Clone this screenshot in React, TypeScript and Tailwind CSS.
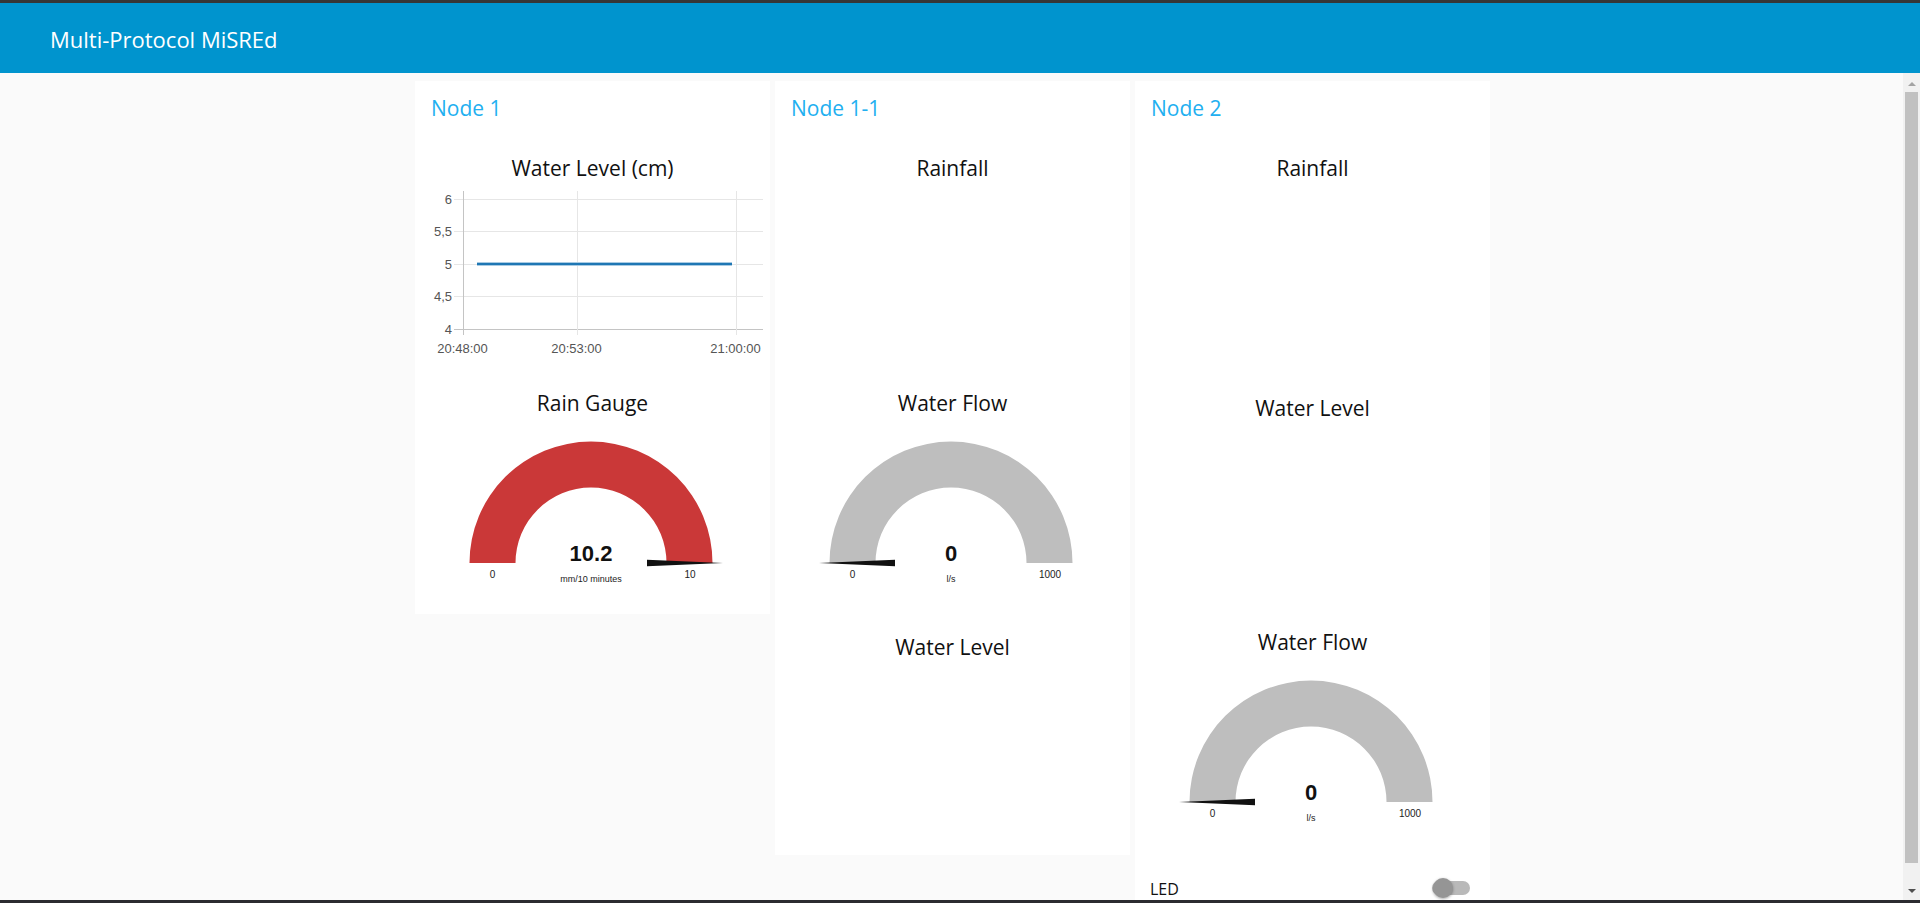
import React from 'react';

// gauge geometry shared by all three dials
const CX = 176;
const CY = 147;
const R_OUT = 121.5;
const R_IN = 75.5;

type GaugeProps = {
  value: string;
  unit: string;
  min: string;
  max: string;
  color: string;
  atMax?: boolean;
  className: string;
};

const Gauge: React.FC<GaugeProps> = ({ value, unit, min, max, color, atMax, className }) => {
  const ring = `M ${CX - R_OUT} ${CY} A ${R_OUT} ${R_OUT} 0 0 1 ${CX + R_OUT} ${CY} L ${CX + R_IN} ${CY} A ${R_IN} ${R_IN} 0 0 0 ${CX - R_IN} ${CY} Z`;
  const s = atMax ? 1 : -1;
  const needle = `${CX + s * 56},${CY - 3.3} ${CX + s * 132},${CY} ${CX + s * 56},${CY + 3.3}`;

  return (
    <svg width="355" className={`block ${className}`}>
      <path d={ring} fill={color} />
      <polygon points={needle} fill="#111" />
      <text x={CX} y={CY - 2.5} textAnchor="middle" fontFamily="'Liberation Sans', Arial, sans-serif" fontWeight="bold" fontSize="22" fill="#111">
        {value}
      </text>
      <text x={CX} y={CY + 19} textAnchor="middle" fontFamily="'Liberation Sans', Arial, sans-serif" fontSize="9" fill="#222">
        {unit}
      </text>
      <text x={CX - 98.5} y={CY + 15} textAnchor="middle" fontFamily="'Liberation Sans', Arial, sans-serif" fontSize="10" fill="#222">
        {min}
      </text>
      <text x={CX + 99} y={CY + 15} textAnchor="middle" fontFamily="'Liberation Sans', Arial, sans-serif" fontSize="10" fill="#222">
        {max}
      </text>
    </svg>
  );
};

const yTicks = [
  { y: 18.5, label: '6' },
  { y: 50.5, label: '5,5' },
  { y: 83.5, label: '5' },
  { y: 115.5, label: '4,5' },
  { y: 148.5, label: '4' },
];

const xTicks = [
  { x: 48.5, label: '20:48:00' },
  { x: 162.5, label: '20:53:00' },
  { x: 321.5, label: '21:00:00' },
];

const LineChart: React.FC = () => (
  <svg width="355" height="207" className="block" fontFamily="'Liberation Sans', Arial, sans-serif" fontSize="13">
    {yTicks.map((t) => (
      <g key={t.label}>
        <line x1="39" x2="348" y1={t.y} y2={t.y} stroke={t.label === '4' ? '#c4c4c4' : '#e6e6e6'} />
        <text x="37" y={t.y + 4.5} textAnchor="end" fill="#555">
          {t.label}
        </text>
      </g>
    ))}
    {xTicks.map((t, i) => (
      <g key={t.label}>
        <line x1={t.x} x2={t.x} y1="10" y2="154" stroke={i === 0 ? '#c4c4c4' : '#e6e6e6'} />
        <text x={t.x - 1} y="171.5" textAnchor="middle" fill="#555">
          {t.label}
        </text>
      </g>
    ))}
    <line x1="62" x2="317" y1="83" y2="83" stroke="#a9cbe3" strokeWidth="4" />
    <line x1="62" x2="317" y1="83" y2="83" stroke="#1f77b4" strokeWidth="2.2" />
  </svg>
);

const WidgetTitle: React.FC<{ children: React.ReactNode }> = ({ children }) => (
  <div className="h-[28px] pt-px leading-[28px] text-center text-[21px] text-[#111] font-['Open_Sans',sans-serif]">
    {children}
  </div>
);

const Card: React.FC<{ title: string; children: React.ReactNode }> = ({ title, children }) => (
  <div className="w-[355px] shrink-0 bg-white flex flex-col">
    <div className="h-[72px] pt-[13px] pl-[16px] text-[21px] leading-[28px] text-[#22aff0] font-['Open_Sans',sans-serif]">
      {title}
    </div>
    {children}
  </div>
);

export default function App() {
  return (
    <div className="w-[1920px] h-[903px] flex flex-col overflow-hidden bg-[#fafafa]">
      <div className="h-[3px] bg-[#363636]" />
      <header className="h-[70px] bg-[#0094ce] flex items-center pl-[50px] pt-[3px]">
        <span className="text-white text-[22px] font-['Open_Sans',sans-serif]">Multi-Protocol MiSREd</span>
      </header>

      <div className="flex flex-1 min-h-0">
        <main className="flex-1 overflow-hidden">
          <div className="flex justify-center items-start gap-[5px] pt-[8px] pl-[2px]">
            <Card title="Node 1">
              <div className="h-[235px]">
                <WidgetTitle>Water Level (cm)</WidgetTitle>
                <LineChart />
              </div>
              <div className="h-[226px]">
                <WidgetTitle>Rain Gauge</WidgetTitle>
                <Gauge value="10.2" unit="mm/10 minutes" min="0" max="10" color="#ca3838" atMax className="h-[198px]" />
              </div>
            </Card>

            <Card title="Node 1-1">
              <div className="h-[235px]">
                <WidgetTitle>Rainfall</WidgetTitle>
              </div>
              <div className="h-[244px]">
                <WidgetTitle>Water Flow</WidgetTitle>
                <Gauge value="0" unit="l/s" min="0" max="1000" color="#bebebe" className="h-[216px]" />
              </div>
              <div className="h-[223px]">
                <WidgetTitle>Water Level</WidgetTitle>
              </div>
            </Card>

            <Card title="Node 2">
              <div className="h-[240px]">
                <WidgetTitle>Rainfall</WidgetTitle>
              </div>
              <div className="h-[234px]">
                <WidgetTitle>Water Level</WidgetTitle>
              </div>
              <div>
                <WidgetTitle>Water Flow</WidgetTitle>
                <Gauge value="0" unit="l/s" min="0" max="1000" color="#bebebe" className="h-[221px]" />
              </div>
              <div className="h-[24px] flex items-center justify-between pl-[15px] pr-[20px]">
                <span className="text-[16px] leading-[24px] pt-px text-[#111] font-['Open_Sans',sans-serif]">LED</span>
                <div className="relative w-[38px] h-[14px] rounded-full bg-[#b9b9b9]">
                  <div className="absolute left-px top-[-3px] w-[20px] h-[20px] rounded-full bg-[#959595] shadow-[0_1px_3px_rgba(0,0,0,0.35)]" />
                </div>
              </div>
              <div className="h-[40px]" />
            </Card>
          </div>
        </main>

        <div className="w-[17px] bg-[#f1f1f1] flex flex-col items-center">
          <div className="h-[19px] pt-[9px]">
            <div className="w-0 h-0 border-x-[4px] border-x-transparent border-b-[4px] border-b-[#a3a3a3]" />
          </div>
          <div className="w-[13px] h-[771px] bg-[#c1c1c1]" />
          <div className="flex-1 flex items-end pb-[7px]">
            <div className="w-0 h-0 border-x-[4px] border-x-transparent border-t-[4px] border-t-[#505050]" />
          </div>
        </div>
      </div>
      <div className="h-[3px] bg-[#2b2b30]" />
    </div>
  );
}
